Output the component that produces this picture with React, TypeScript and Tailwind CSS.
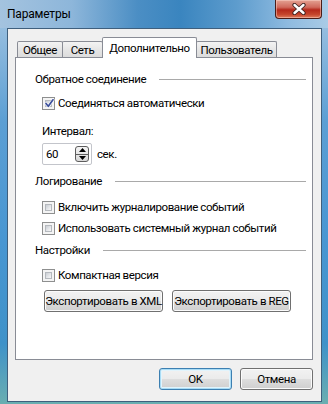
import React from 'react';

const font = { fontFamily: 'Roboto, "Liberation Sans", sans-serif' };

const CheckBox: React.FC<{ checked?: boolean }> = ({ checked }) => (
  <span className="relative w-[13px] h-[13px] shrink-0 border border-[#8e8f8f] bg-[#f4f4f4] p-[2px] flex">
    <span className="flex-1 border border-[#b5b9be] bg-[linear-gradient(135deg,#c9cdd3_0%,#e4e6e9_55%,#f7f7f7_100%)]" />
    {checked && (
      <svg className="absolute left-[1px] top-[0px]" width="11" height="11" viewBox="0 0 11 11">
        <path d="M2 5.5 L4.3 8.3 L9 1.8" fill="none" stroke="#ffffff" strokeWidth="3" strokeLinecap="round" strokeLinejoin="round" opacity="0.8" />
        <path d="M2 5.5 L4.3 8.3 L9 1.8" fill="none" stroke="#3b4f9c" strokeWidth="1.7" strokeLinecap="round" strokeLinejoin="round" />
      </svg>
    )}
  </span>
);

const CheckRow: React.FC<{ label: string; checked?: boolean; mt: string }> = ({ label, checked, mt }) => (
  <div className={`flex items-center h-[16px] pl-[7px] gap-[3px] whitespace-nowrap ${mt}`}>
    <CheckBox checked={checked} />
    <span>{label}</span>
  </div>
);

const Heading: React.FC<{ label: string; mt: string }> = ({ label, mt }) => (
  <div className={`flex items-center h-[16px] gap-[13px] whitespace-nowrap ${mt}`}>
    <span>{label}</span>
    <span className="flex-1 h-px bg-[#a9a9a9]" />
  </div>
);

const Button: React.FC<{ label: string; w: string; primary?: boolean }> = ({ label, w, primary }) => (
  <button
    className={`${w} h-[22px] rounded-[3px] border flex items-center justify-center whitespace-nowrap bg-[linear-gradient(#f2f2f2_0%,#ebebeb_48%,#dddddd_52%,#cfcfcf_100%)] ${
      primary
        ? 'border-[#3c7fb1] shadow-[inset_0_0_0_1px_#a9dcf5,inset_0_0_0_2px_#e2f4fc]'
        : 'border-[#707070] shadow-[inset_0_0_0_1px_#fbfbfb]'
    }`}
  >
    {label}
  </button>
);

export default function App() {
  const tabs = [
    { name: 'Общее', w: 'w-[46px]' },
    { name: 'Сеть', w: 'w-[41px]' },
    { name: 'Дополнительно', w: 'w-[95px]', active: true },
    { name: 'Пользователь', w: 'w-[81px]' },
  ];

  return (
    <div
      style={font}
      className="w-[328px] h-[404px] overflow-hidden flex flex-col text-[11.5px] tracking-[-0.4px] leading-[16px] text-black bg-[linear-gradient(180deg,#a6c6e2_0%,#5c9fd4_30%,#4896d2_60%,#3f92c9_85%,#6aaeb0_100%)]"
    >
      {/* title bar */}
      <div className="relative h-[28px] shrink-0 flex items-center pl-[7px] pb-[1px] bg-[linear-gradient(90deg,#a4c3df_0%,#8db6da_22%,#4b8ec4_42%,#3a85bf_55%,#5d9ccd_72%,#8fbbe0_88%,#a9cbe6_100%)]">
        <span className="text-[12px] tracking-[-0.2px]">Параметры</span>
        <div className="absolute top-0 left-[275px] w-[47px] h-[19px] rounded-b-[4px] border border-t-0 border-[#4a1c17] bg-[linear-gradient(180deg,#e4a292_0%,#d06a5c_40%,#b5291b_55%,#c5452c_80%,#e07d5e_100%)] shadow-[inset_0_0_0_1px_rgba(255,220,210,0.45)] flex items-center justify-center">
          <svg width="16" height="12" viewBox="0 0 16 12">
            <path d="M3.5 2 L12.5 10 M12.5 2 L3.5 10" stroke="#3a2220" strokeWidth="4.2" strokeLinecap="round" />
            <path d="M3.5 2 L12.5 10 M12.5 2 L3.5 10" stroke="#ffffff" strokeWidth="2.4" strokeLinecap="round" />
          </svg>
        </div>
      </div>

      {/* client area */}
      <div className="flex-1 ml-[7px] mr-[6px] mb-[2px] border border-[#3f5f7d] bg-[#f0f0f0] flex flex-col pt-[8px] pl-[7px] pr-[8px]">
        {/* tabs */}
        <div className="flex items-end h-[20px] pl-[2px] relative z-10 whitespace-nowrap">
          {tabs.map((t) =>
            t.active ? (
              <div
                key={t.name}
                className={`${t.w} h-[21px] -mb-[1px] -mr-px bg-white border border-b-0 border-[#898c95] rounded-t-[2px] flex items-start justify-center pt-[2px]`}
              >
                {t.name}
              </div>
            ) : (
              <div
                key={t.name}
                className={`${t.w} h-[16px] border border-b-0 border-[#898c95] rounded-t-[2px] bg-[linear-gradient(#f3f3f3,#e6e6e6_50%,#dcdcdc)] flex items-center justify-center pt-[1px] -mr-px last:mr-0`}
              >
                {t.name}
              </div>
            )
          )}
        </div>

        {/* tab panel */}
        <div className="h-[303px] bg-white border border-[#898c95] flex flex-col pl-[19px] pr-[6px]">
          <Heading label="Обратное соединение" mt="mt-[13px]" />
          <CheckRow label="Соединяться автоматически" checked mt="mt-[8px]" />
          <div className="h-[16px] flex items-center pl-[7px] mt-[12px]">Интервал:</div>
          <div className="flex items-center pl-[7px] mt-[4px] gap-[5px]">
            <div className="w-[50px] h-[22px] border border-[#c3c5cb] rounded-[2px] bg-white flex items-center justify-between pl-[3px] pr-[2px]">
              <span>60</span>
              <div className="w-[14px] h-[16px] rounded-[3px] border border-[#5d5d5d] bg-[linear-gradient(#f4f4f4,#d9d9d9)] flex flex-col">
                <div className="flex-1 flex items-center justify-center border-b border-[#5d5d5d]">
                  <svg width="7" height="4" viewBox="0 0 7 4"><path d="M0 4 L3.5 0 L7 4 Z" fill="#000" /></svg>
                </div>
                <div className="flex-1 flex items-center justify-center">
                  <svg width="7" height="4" viewBox="0 0 7 4"><path d="M0 0 L3.5 4 L7 0 Z" fill="#000" /></svg>
                </div>
              </div>
            </div>
            <span>сек.</span>
          </div>
          <Heading label="Логирование" mt="mt-[8px]" />
          <CheckRow label="Включить журналирование событий" mt="mt-[10px]" />
          <CheckRow label="Использовать системный журнал событий" mt="mt-[5px]" />
          <Heading label="Настройки" mt="mt-[6px]" />
          <CheckRow label="Компактная версия" mt="mt-[9px]" />
          <div className="flex gap-[9px] pl-[9px] mt-[7px]">
            <Button label="Экспортировать в XML" w="w-[119px]" />
            <Button label="Экспортировать в REG" w="w-[119px]" />
          </div>
        </div>

        {/* dialog buttons */}
        <div className="flex justify-end gap-[8px] mt-[8px]">
          <Button label="OK" w="w-[73px]" primary />
          <Button label="Отмена" w="w-[73px]" />
        </div>
      </div>
    </div>
  );
}
